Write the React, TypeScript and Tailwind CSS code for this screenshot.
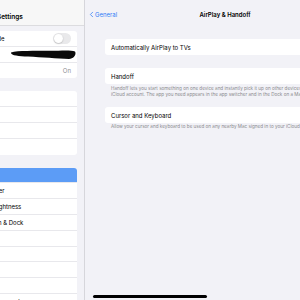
import { ChevronLeft } from 'lucide-react';

type Row = {
  label: string;
  value?: string;
  toggle?: boolean;
  redacted?: boolean;
  selected?: boolean;
};

const groups: Row[][] = [
  [
    { label: 'Airplane Mode', toggle: true },
    { label: 'Wi-Fi', redacted: true },
    { label: 'Bluetooth', value: 'On' },
  ],
  [{ label: 'Notifications' }, { label: 'Sounds' }, { label: 'Focus' }, { label: 'Screen Time' }],
  [
    { label: 'General', selected: true },
    { label: 'Control Center' },
    { label: 'Display & Brightness' },
    { label: 'Home Screen & Dock' },
    { label: 'Accessibility' },
    { label: 'Wallpaper' },
    { label: 'Siri & Search' },
    { label: 'Apple Pencil' },
    { label: 'Touch ID & Passcode' },
    { label: 'Battery' },
  ],
];

function Toggle() {
  return (
    <div className="w-[18px] h-[11px] rounded-full bg-[#e9e9eb] p-[1px] flex">
      <div className="w-[9px] h-[9px] rounded-full bg-white shadow-[0_0.5px_1.5px_rgba(0,0,0,0.25)]" />
    </div>
  );
}

function Redacted() {
  return (
    <svg width="66" height="11" viewBox="0 0 66 11" className="mr-[1px]">
      <path
        d="M1 3.5 C8 1.5 24 2 40 1.8 C52 1.5 61 0.8 65 2.5 C66.5 5 64.5 9.8 59 10 C47 9.6 32 8.4 18 7.6 C9 7.2 0.5 6.6 1 3.5 Z"
        fill="#0a0a0a"
      />
    </svg>
  );
}

function Sidebar() {
  return (
    <aside className="w-[85px] shrink-0 border-r border-[#d6d6db] flex flex-col overflow-hidden">
      <div className="h-[26px] shrink-0 bg-[#f7f7f7] border-b border-[#dcdcdf] pt-[13px]">
        <div className="ml-[-3px] text-[6.5px] leading-[8px] font-semibold text-black whitespace-nowrap">Settings</div>
      </div>
      <div className="flex flex-col gap-[13px] pt-[5px]">
        {groups.map((group, gi) => (
          <div key={gi} className="ml-[-57px] mr-[7px] bg-white rounded-[3px] overflow-hidden">
            {group.map((row, ri) => (
              <div
                key={row.label}
                className={`h-[15.8px] pl-[20px] flex items-center whitespace-nowrap text-[6px] ${
                  row.selected ? 'bg-[#5c9cf6] text-white' : 'text-black'
                } ${ri < group.length - 1 ? 'border-b border-[#e8e8ec]' : ''}`}
              >
                <span className="flex-1">{row.label}</span>
                {row.toggle && (
                  <div className="mr-[6px]">
                    <Toggle />
                  </div>
                )}
                {row.redacted && <Redacted />}
                {row.value && <span className="mr-[6px] text-[#8e8e93]">{row.value}</span>}
              </div>
            ))}
          </div>
        ))}
      </div>
    </aside>
  );
}

function Detail() {
  return (
    <section className="w-[280px] shrink-0 flex flex-col">
      <div className="h-[26px] grid grid-cols-[1fr_auto_1fr] items-center pt-[2px]">
        <div className="flex items-center text-[#2f7cf6] text-[6px] pl-[2px]">
          <ChevronLeft size={9} strokeWidth={2} />
          <span className="-ml-[1px]">General</span>
        </div>
        <div className="text-[6px] font-semibold text-black whitespace-nowrap">AirPlay &amp; Handoff</div>
        <div />
      </div>

      <div className="px-[20px] pt-[13px] flex flex-col">
        <div className="h-[16px] bg-white rounded-[3px] flex items-center px-[6px] text-[6px] text-black whitespace-nowrap">
          Automatically AirPlay to TVs
        </div>

        <div className="mt-[13px] h-[16px] bg-white rounded-[3px] flex items-center px-[6px] text-[6px] text-black">
          Handoff
        </div>
        <div className="px-[6px] pt-[2px] text-[4.6px] leading-[6px] text-[#8a8a8e] whitespace-nowrap">
          <div>Handoff lets you start something on one device and instantly pick it up on other devices using your</div>
          <div>iCloud account. The app you need appears in the app switcher and in the Dock on a Mac.</div>
        </div>

        <div className="mt-[9px] h-[16px] bg-white rounded-[3px] flex items-center px-[6px] text-[6px] text-black">
          Cursor and Keyboard
        </div>
        <div className="px-[6px] pt-[1px] text-[4.6px] leading-[6px] text-[#8a8a8e] whitespace-nowrap">
          Allow your cursor and keyboard to be used on any nearby Mac signed in to your iCloud account.
        </div>
      </div>
    </section>
  );
}

export default function App() {
  return (
    <div
      className="relative w-[300px] h-[300px] overflow-hidden flex bg-[#f2f2f7]"
      style={{ fontFamily: 'Inter, "Noto Sans", sans-serif' }}
    >
      <Sidebar />
      <Detail />
      <div className="absolute left-[93px] top-[295px] w-[114px] h-[2.5px] rounded-full bg-black" />
    </div>
  );
}
